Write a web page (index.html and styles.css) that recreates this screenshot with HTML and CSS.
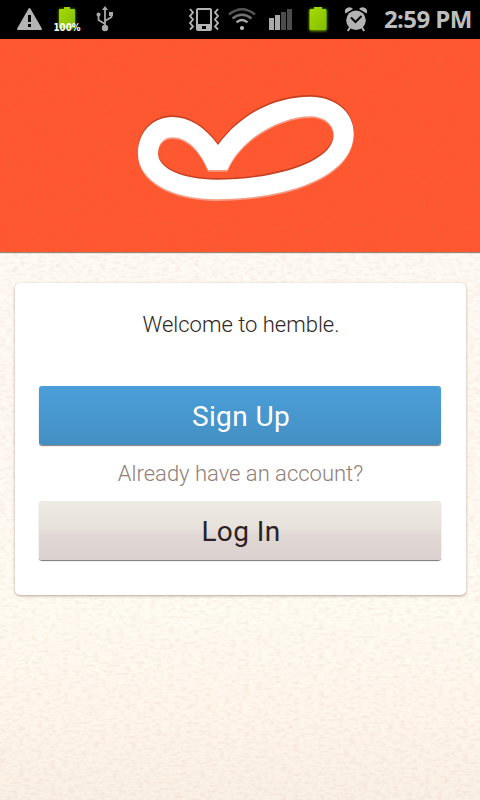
FILE: index.html
```html
<!DOCTYPE html>
<html lang="en">
<head>
<meta charset="utf-8">
<title>hemble</title>
<link rel="stylesheet" href="styles.css">
</head>
<body>
<div class="screen">
  <svg class="paper" width="480" height="761" aria-hidden="true">
    <filter id="grain" x="0" y="0" width="100%" height="100%">
      <feTurbulence type="fractalNoise" baseFrequency="0.16 0.35" numOctaves="3" seed="4"/>
      <feColorMatrix values="0 0 0 0 0.5  0 0 0 0 0.2  0 0 0 0 0.1  0.9 0 0 0 -0.38"/>
    </filter>
    <rect width="480" height="761" filter="url(#grain)"/>
  </svg>
  <header class="status">
    <svg class="icons" width="380" height="39" viewBox="0 0 380 39">
      <defs>
        <linearGradient id="green" x1="0" y1="0" x2="1" y2="1"><stop stop-color="#a5dc00"/><stop offset="1" stop-color="#83bd00"/></linearGradient>
        <filter id="glow" x="-50%" y="-50%" width="200%" height="200%"><feGaussianBlur stdDeviation="1.7"/></filter>
      </defs>
      <path fill="#b3b3b3" stroke="#b3b3b3" stroke-width="2" stroke-linejoin="round" d="M29.5 9 41 29H18Z"/>
      <path fill="#000" d="M28 15h3v7h-3zM28 24h3v3h-3z"/>
      <path fill="#69a000" filter="url(#glow)" d="M59 9h16v20H59z"/>
      <path fill="url(#green)" d="M60 9h4V7h6v2h4q1 0 1 1v18H59V10q0-1 1-1z"/>
      <text class="percent" x="53.5" y="31" textLength="27" lengthAdjust="spacingAndGlyphs">100%</text>
      <g fill="none" stroke="#a9a9a9" stroke-width="1.8">
        <path d="M105 27V9M105 24l-6.500-4v-5M105 21l6.500-4v-3"/>
      </g>
      <path fill="#a9a9a9" d="m105 6 3 4h-6zM109 12h4v4h-4z"/><circle cx="98.500" cy="14.500" r="2" fill="#a9a9a9"/><circle cx="105" cy="28" r="3.200" fill="#a9a9a9"/>
      <path fill="#b5b5b5" fill-rule="evenodd" d="M198 8h12q2 0 2 2v19q0 2-2 2h-12q-2 0-2-2V10q0-2 2-2zm0 2v14h12V10zm4 16v3h4v-3z"/>
      <path fill="none" stroke="#b5b5b5" stroke-width="1.900" d="m190 9 3 3.500-3 3.500 3 3.500-3 3.500 3 3.500-3 3M218 9l-3 3.500 3 3.500-3 3.500 3 3.500-3 3.500 3 3"/>
      <g fill="none" stroke-width="2.300">
        <path stroke="#555" d="M229 14.500q13-10.500 26 0"/>
        <path stroke="#747474" d="M232.500 18.500q9.500-7.500 19 0"/>
        <path stroke="#aaa" d="M236.500 22.300q5.500-4.500 11 0"/>
      </g>
      <circle cx="242" cy="28" r="2.100" fill="#bbb"/>
      <path fill="#aaa" d="M269 18h5v12h-5zM275 15h5v15h-5z"/>
      <path fill="#4c4c4c" d="M281 12h5v18h-5zM287 9h5v21h-5z"/>
      <path fill="#79b500" filter="url(#glow)" d="M309.500 9h17v22h-17z"/>
      <path fill="url(#green)" d="M311 9h3V7h8v2h3q1.500 0 1.500 1.500v18q0 1.500-1.500 1.500h-14q-1.500 0-1.500-1.500v-18Q309.500 9 311 9z"/>
      <g fill="#b3b3b3">
        <circle cx="356" cy="20.300" r="9.800"/>
        <path d="M345.300 13.500q-1.500-4 2-5.800 3.500-1.500 5.700 1.300zM366.700 13.500q1.500-4-2-5.800-3.500-1.500-5.700 1.300z"/>
      </g>
      <path fill="none" stroke="#b3b3b3" stroke-width="2" d="m350 27.500-2.200 3.500M362 27.500l2.200 3.500"/>
      <path fill="none" stroke="#000" stroke-width="2" d="m351 17.500 4.500 4.500 6-6"/>
    </svg>
    <span class="clock">2:59 PM</span>
  </header>
  <section class="hero">
    <svg class="logo" width="250" height="140" viewBox="0 0 750 420" role="img" aria-label="hemble">
      <defs>
        <path id="bean" fill-rule="evenodd" d="M294 195C255 140 205 111 157 111C100 111 54 155 54 220C54 300 150 358 290 358C500 358 701 290 701 160C701 95 645 50 570 50C480 50 370 90 294 195ZM264 270C240 210 200 172 157 172C132 172 114 190 114 220C114 265 185 299 290 299C470 299 641 245 641 165C641 130 610 109 570 109C500 109 370 160 322 270Z"/>
      </defs>
      <use href="#bean" y="-5" fill="#c34122"/>
      <use href="#bean" y="5" fill="#f59b83"/>
      <use href="#bean" fill="#fff"/>
    </svg>
  </section>
  <main class="card">
    <p class="welcome">Welcome to hemble.</p>
    <button class="btn primary">Sign Up</button>
    <p class="hint">Already have an account?</p>
    <button class="btn plain">Log In</button>
  </main>
</div>
</body>
</html>
```
FILE: styles.css
```css
* { box-sizing: border-box; }
body { margin: 0; font-family: Roboto, sans-serif; }
.screen {
  position: relative;
  width: 480px;
  height: 800px;
  overflow: hidden;
  background: linear-gradient(#fffaf5 250px, #fff9f3 450px, #fffcf3 610px, #fff6ec 710px, #faf0e5 800px);
}
.paper { position: absolute; left: 0; top: 39px; opacity: .28; z-index: 1; pointer-events: none; }
.status {
  position: relative;
  z-index: 2;
  display: flex;
  height: 39px;
  background: #000;
}
.icons { flex: none; }
.percent { font: bold 10px "DejaVu Sans", sans-serif; fill: #fff; }
.clock {
  flex: 1;
  padding-left: 4px;
  font: bold 24px/38px "Open Sans", sans-serif;
  color: #bebebe;
  white-space: nowrap;
  letter-spacing: -.6px;
}
.hero {
  height: 213px;
  padding: 41px 0 0 120px;
  background: #ff5730;
  box-shadow: 0 1px 1px #968878;
}
.logo { display: block; position: relative; z-index: 2; }
.card {
  position: relative;
  z-index: 2;
  width: 451px;
  height: 312px;
  margin: 31px 0 0 15px;
  padding: 27px 25px 0 24px;
  border-radius: 5px;
  background: #fff;
  box-shadow: 0 1px 3px rgba(110, 80, 65, .5);
  text-align: center;
}
p { margin: 0; padding-left: 2px; }
.welcome { height: 76px; font-size: 22px; font-weight: 300; line-height: 30px; color: #2d2626; }
.hint { height: 56px; padding-left: 1px; font-size: 22px; font-weight: 300; line-height: 57px; color: #918078; }
.btn {
  display: block;
  width: 100%;
  height: 59px;
  padding: 3px 0 0 2px;
  border: 0;
  border-radius: 3px;
  font: 400 28px/56px Roboto, sans-serif;
  letter-spacing: .4px;
}
.primary { padding-top: 2px; color: #fff; background: linear-gradient(#4b9fd9, #438fc2); box-shadow: 0 1px 1px #87797a; }
.plain { color: #2a2222; background: linear-gradient(#eeeae4, #e7e1db 45%, #e0d7d5 60%, #dbd2d0); box-shadow: 0 1px 1px #777; }
```
